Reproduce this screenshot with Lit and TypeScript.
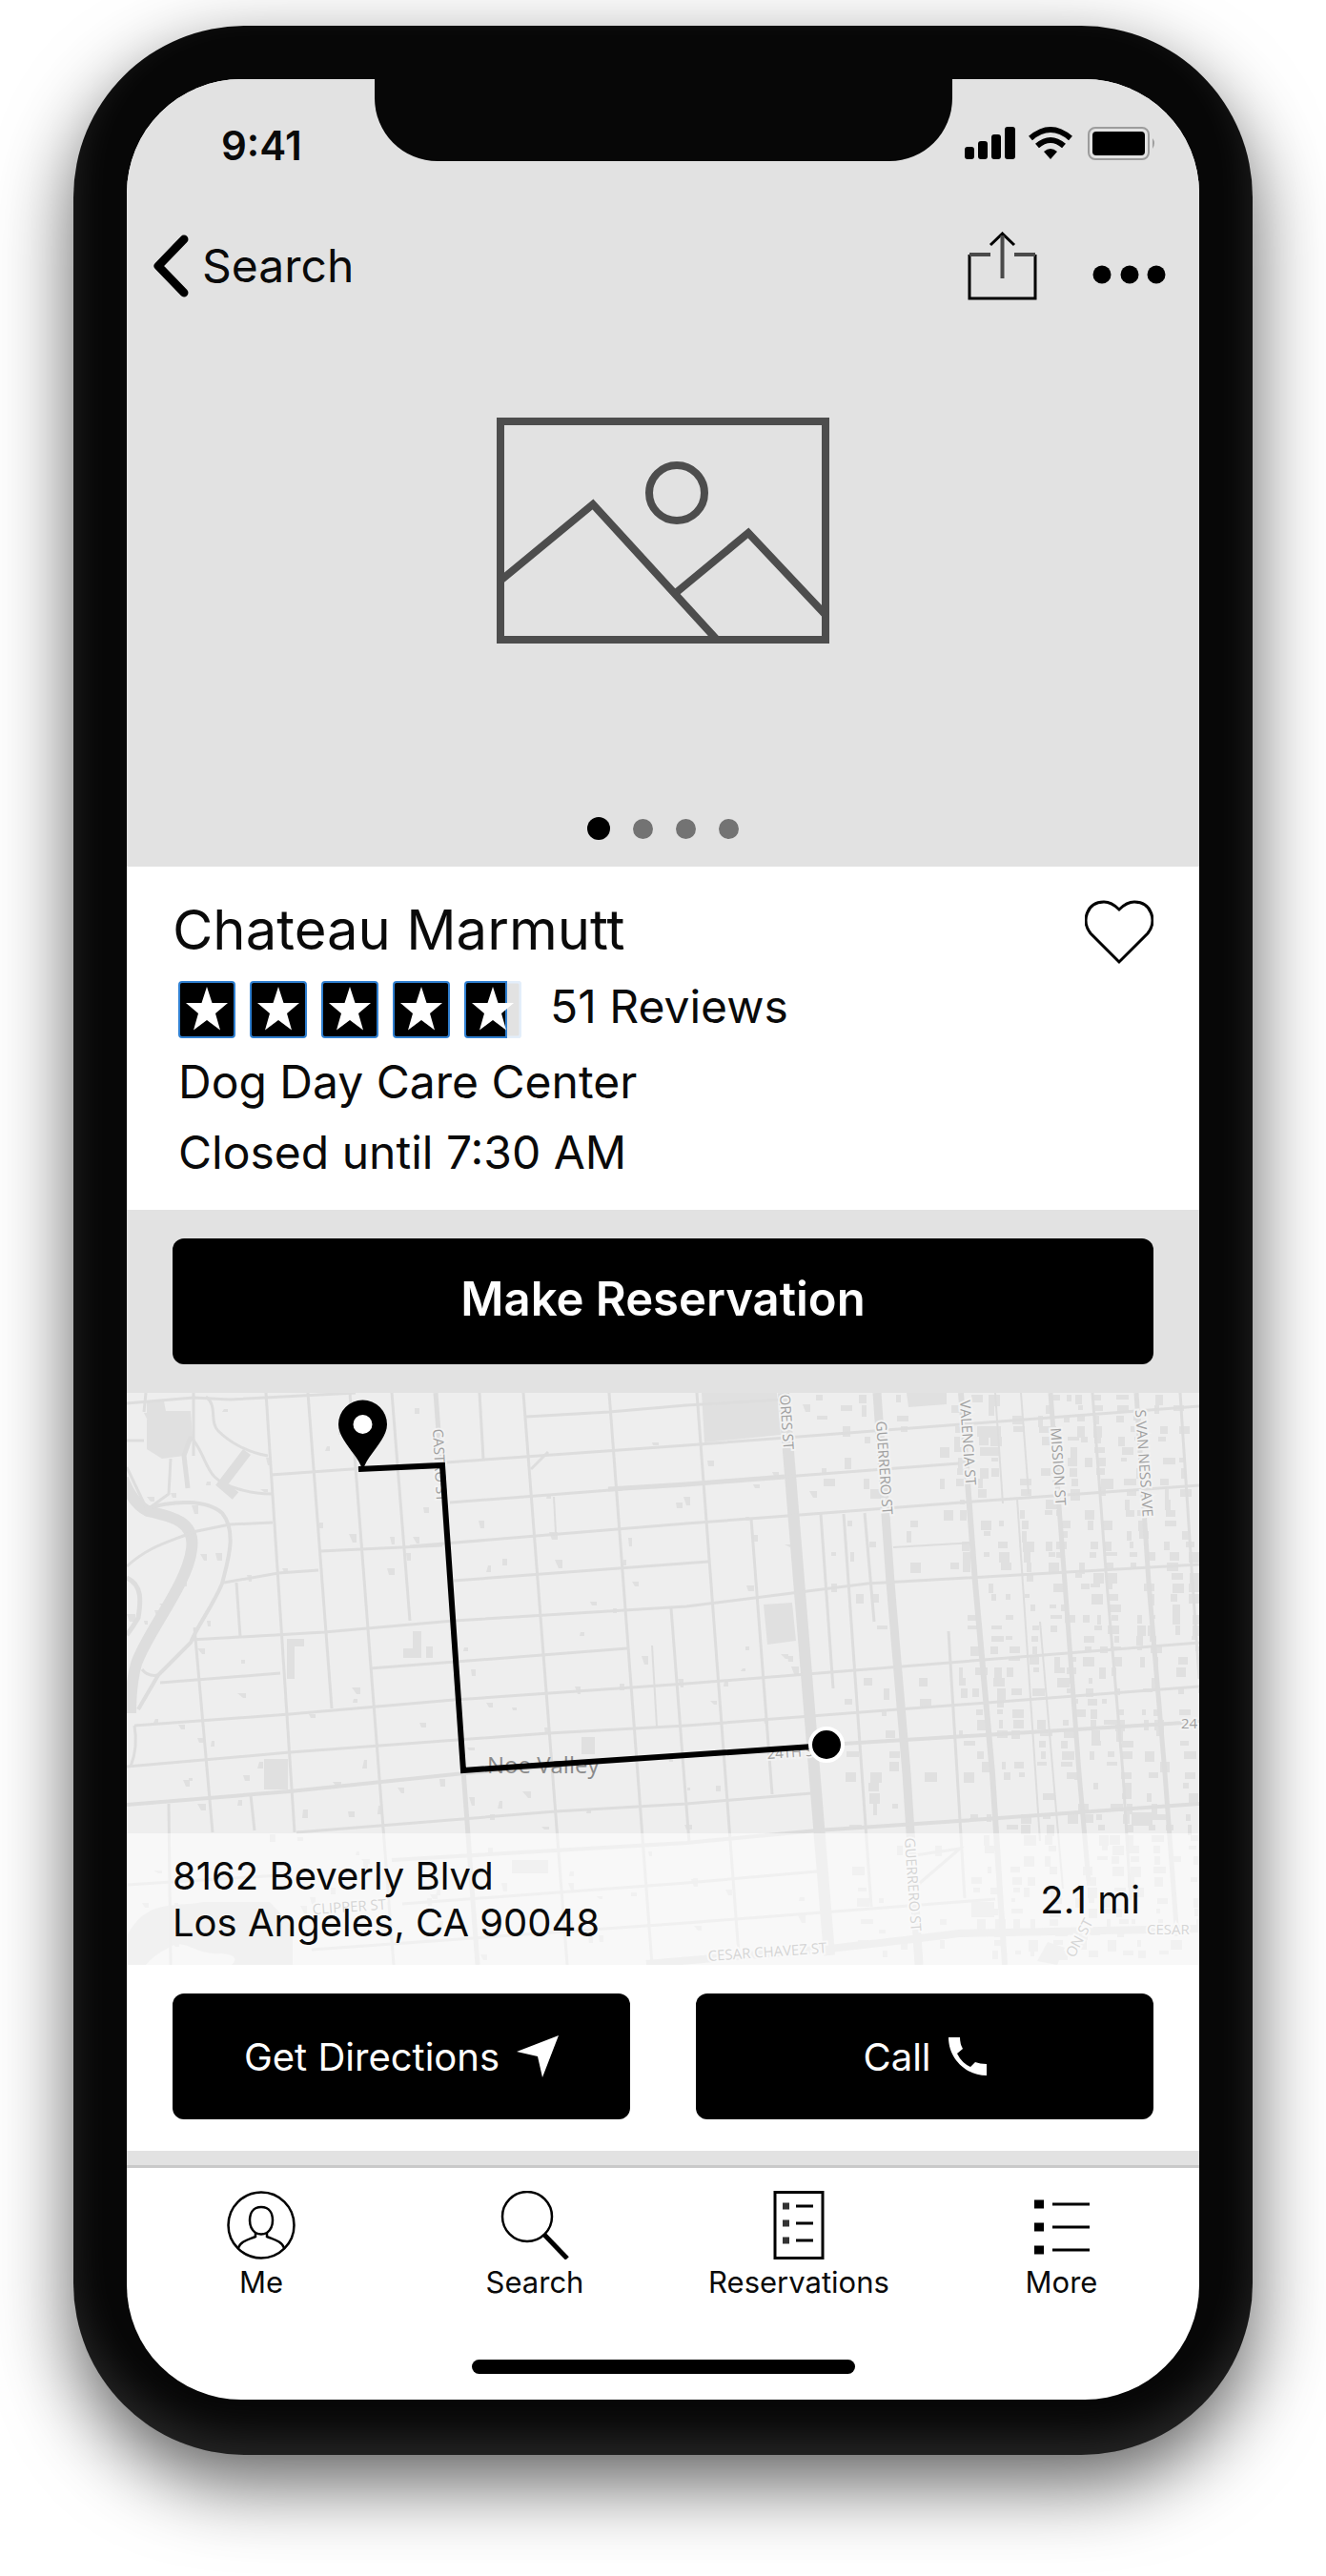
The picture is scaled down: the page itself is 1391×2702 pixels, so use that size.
import { LitElement, html, svg, css } from "lit";
import { customElement, property } from "lit/decorators.js";

type Street = [number, string];

/* Street centre lines of the neighbourhood, as [stroke width, points]. */
const STREETS: Street[] = [
  [3, "146,0 176,461"], [3, "190,0 215,331"], [3, "234,0 280,600"], [3, "278,0 297,239"],
  [5, "324,0 368,600"], [3, "370,0 374,69"], [3, "416,0 462,600"], [3, "506,0 551,600"],
  [3, "571,226 590,472"], [3, "71,246 90,461"], [3, "115,199 119,256"], [3, "44,431 46,600"],
  [3, "130,422 134,459"], [3, "598,0 642,590"], [3, "655,132 677,421"], [12, "689,0 737,590"],
  [3, "728,127 741,310"], [3, "752,127 781,539"], [3, "774,126 784,240"], [9, "787,0 801,199 818,399 831,600"],
  [3, "862,250 879,530"], [6, "875,0 890,199 908,399 921,600"], [2, "911,0 919,116"], [2, "938,0 946,106"],
  [2, "934,111 958,470"], [5, "969,0 984,199 999,399 1009,512"], [3, "1013,0 1028,199 1045,399 1053,532"],
  [5, "1059,0 1072,199 1089,399 1101,559"], [3, "1105,0 1118,199 1125,300"], [2, "958,240 982,520"],
  [3, "20,0 18,20"], [3, "70,0 70,66"],
  [3, "0,11 70,5 108,7 240,0"], [3, "151,86 587,55 1125,14"], [3, "339,115 520,101"], [5, "505,101 587,96 690,88"],
  [3, "690,88 873,74"], [3, "203,166 331,160"], [3, "297,161 587,137 693,129 888,114 1125,97"],
  [3, "102,199 159,189 201,186"], [3, "343,197 610,177"], [2, "804,162 888,157"],
  [3, "67,259 207,251 343,239 587,224 777,200 1125,180"], [3, "255,289 525,268"], [3, "35,304 161,294"],
  [3, "8,349 171,337 343,322 587,305 1125,262"], [3, "0,392 171,377 442,357 587,349 1125,308"],
  [4, "0,432 171,418 354,399 735,369 1125,345"], [3, "178,461 450,439 587,431 718,420"],
  [4, "278,490 587,472 724,459 873,449 1125,431"], [3, "289,536 587,514 724,502"], [3, "194,584 587,556 911,531"],
  [3, "0,516 160,506"], [8, "545,599 737,583 816,574 873,567 1125,562"], [3, "419,25 506,20 587,13 690,7"],
  [3, "825,520 874,478 820,486"], [2, "448,109 450,147"], [3, "424,80 442,62"], [2, "551,265 556,350"],
];

const CURVES: Street[] = [
  [12, "M-4 90 Q6 116 22 124 C50 130 72 136 68 164 C64 200 22 250 10 284 Q4 306 4 336"],
  [3, "M83 4 C96 14 86 30 96 40 S124 62 148 66"],
  [3, "M67 46 C80 60 82 78 92 88 S128 106 152 106"],
  [5, "M67 46 L60 66 L64 100"],
  [4, "M18 122 C50 112 84 112 100 126 C116 146 106 176 100 200 C90 224 74 244 67 262 L33 296 L12 332"],
  [3, "M0 182 C24 160 46 156 69 146 L108 138 L153 136"],
  [3, "M46 69 L44 106 L22 122"],
  [3, "M20 120 L0 78 M0 50 L18 50"],
  [5, "M0 194 C18 202 14 222 12 236 Q6 246 0 254"],
  [3, "M16 290 Q22 298 33 296"],
  [3, "M8 349 Q12 372 4 392"],
  [10, "M126 62 L100 96 L114 108"],
];

const BLOCKS = [
  "M21 9H39L41 19H67L69 46L60 66L37 69L21 59Z", "M144 384h25v32h-25Z", "M603 0H682L686 44L606 52Z",
  "M668 222L698 220L702 260L672 264Z", "M168 258h18v8h-10v34h-8Z", "M300 250h9v28h-9Z", "M290 268h12v10h-12Z",
  "M314 266h7v12h-7Z", "M818 0H860V12L820 15Z", "M477 361h14v18h-14Z", "M1054 440h22v14h-22Z",
  "M0 570 C20 530 50 540 80 534 H150 L174 560 V600 H110 Q120 590 100 588 C70 590 60 570 44 582 Q28 590 20 600 H0Z",
  "M886 534h24v16h-24Z", "M955 596L966 576L984 582L976 600Z", "M404 490h38v14h-38Z",
];

/* Small building footprints, scattered from a fixed seed so every render is alike. */
const footprints = (): string => {
  let seed = 41;
  const next = (): number => (seed = (seed * 16807) % 2147483647) / 2147483647;
  let d = "";
  for (let i = 0; i < 150; i++) {
    d += `M${Math.round(next() * 720)} ${Math.round(next() * 590)}h${3 + Math.round(next() * 6)}v${3 + Math.round(next() * 6)}h-${3 + Math.round(next() * 3)}Z`;
  }
  const columns = [722, 745, 766, 806, 845, 862, 885, 900, 925, 950, 962, 980, 994, 1010, 1036, 1050, 1076, 1096];
  for (const x of columns) {
    for (let y = 2; y < 590; y += 11) {
      const density = x > 860 ? 0.6 : 0.28;
      if (next() < density) {
        const w = 4 + Math.round(next() * 9);
        const h = 4 + Math.round(next() * 8);
        d += `M${Math.round(x + y * 0.078 + next() * 6)} ${y}h${w}v${h}h-${w}Z`;
      }
    }
  }
  return d;
};

/* [text, x, y, rotation, anchor] */
const STREET_NAMES: [string, number, number, number, string][] = [
  ["CASTRO ST", 321, 38, 87, "start"],
  ["ORES ST", 685, 2, 86, "start"],
  ["GUERRERO ST", 786, 30, 86, "start"],
  ["VALENCIA ST", 874, 8, 86, "start"],
  ["MISSION ST", 969, 37, 86, "start"],
  ["S VAN NESS AVE", 1058, 18, 86, "start"],
  ["24TH ST", 672, 384, -4, "start"],
  ["24", 1106, 352, 0, "start"],
  ["GUERRERO ST", 816, 467, 86, "start"],
  ["CESAR CHAVEZ ST", 610, 596, -4, "start"],
  ["CESAR", 1070, 568, 0, "start"],
  ["CLIPPER ST", 195, 547, -4, "start"],
  ["ON ST", 1014, 555, -62, "end"],
];

@customElement("area-map")
export class AreaMap extends LitElement {
  static styles = css`
    :host { display: block; }
    .map { display: block; width: 100%; background: #eeeeee; }
    .streets, .curves { fill: none; stroke: #dddddd; }
    .blocks { fill: #e0e0e0; }
    .names { font: 15px "Open Sans", "Noto Sans", sans-serif; fill: #a0a0a0; stroke: #f2f2f2; stroke-width: 4px; paint-order: stroke; }
    .district { font: 24px "Open Sans", "Noto Sans", sans-serif; fill: #8a8a8a; }
    .route { fill: none; stroke: #000; stroke-width: 6; }
    .pin { fill: #000; }
    .here { fill: #000; stroke: #fff; stroke-width: 4; }
    .hole { fill: #fff; }
  `;

  render() {
    return html`
      <svg class="map" viewBox="0 0 1125 600" role="img" aria-label="Route map">
        <path class="blocks" d=${BLOCKS.join("") + footprints()}></path>
        <g class="streets">${STREETS.map(([w, p]) => svg`<polyline points=${p} stroke-width=${w}></polyline>`)}</g>
        <g class="curves">${CURVES.map(([w, d]) => svg`<path d=${d} stroke-width=${w}></path>`)}</g>
        <g class="names">
          ${STREET_NAMES.map(([t, x, y, r, a]) => svg`<text text-anchor=${a} transform="translate(${x} ${y}) rotate(${r})">${t}</text>`)}
        </g>
        <text class="district" x="378" y="399">Noe Valley</text>
        <polyline class="route" points="243,80 331,76 353,396 734,370"></polyline>
        <path class="pin" d="M247 81 C244 66 222 50 222 33 A25.5 25.5 0 0 1 273 33 C273 50 251 66 248 81Z"></path>
        <circle class="hole" cx="247.5" cy="33" r="10"></circle>
        <circle class="here" cx="734" cy="369" r="17"></circle>
      </svg>
    `;
  }
}

@customElement("star-rating")
export class StarRating extends LitElement {
  @property({ type: Number }) value = 4.5;

  static styles = css`
    :host { display: flex; gap: 15px; }
    .star { display: block; width: 60px; height: 60px; }
  `;

  render() {
    const star = "M30 6L35.5 23H52L39 34L44 51.5L30 41L16 51.5L21 34L8 23H24.5Z";
    return [0, 1, 2, 3, 4].map((i) => {
      const full = this.value - i >= 1;
      return html`
        <svg class="star" viewBox="0 0 60 60" aria-hidden="true">
          ${full ? null : svg`<rect x="1" y="1" width="58" height="58" rx="3" fill="#e2e2e2" stroke="#e3eefa" stroke-width="3"></rect>`}
          <path d=${full ? "M4 1H56Q59 1 59 4V56Q59 59 56 59H4Q1 59 1 56V4Q1 1 4 1Z" : "M4 1H44V59H4Q1 59 1 56V4Q1 1 4 1Z"}
            fill="#000" stroke="#2f7fd0" stroke-width="2"></path>
          <path d=${star} fill="#fff"></path>
        </svg>`;
    });
  }
}

@customElement("app-root")
export class AppRoot extends LitElement {
  static styles = css`
    :host {
      display: block;
      padding: 27px 77px 127px;
      background: #fff;
      color: #0a0a0a;
      font-family: Inter, Roboto, "Liberation Sans", sans-serif;
      font-size: 48px;
      overflow: hidden;
    }
    *, *::before, *::after { box-sizing: border-box; }
    svg { display: block; flex: none; }
    h1, p { margin: 0; font-weight: 400; }
    button, a { margin: 0; padding: 0; border: 0; background: none; color: inherit; font: inherit; text-decoration: none; cursor: pointer; }
    .phone {
      position: relative;
      padding: 56px 56px 58px;
      border-radius: 180px;
      background: #070707;
      box-shadow:
        inset 0 -20px 40px rgba(255, 255, 255, 0.12),
        0 30px 80px rgba(0, 0, 0, 0.62);
    }
    .notch {
      position: absolute;
      top: 56px;
      left: 50%;
      width: 606px;
      height: 86px;
      margin-left: -303px;
      border-radius: 0 0 66px 66px;
      background: #070707;
    }
    .screen { overflow: hidden; border-radius: 120px; background: #fff; }
    .hero { display: flex; flex-direction: column; padding-bottom: 28px; background: #e2e2e2; }
    .status { display: flex; align-items: center; justify-content: space-between; height: 48px; margin-top: 46px; padding: 0 45px 0 99px; }
    .time { font-size: 42px; font-weight: 600; line-height: 48px; }
    .nav { display: flex; align-items: center; justify-content: space-between; margin-top: 66px; padding: 0 34px 0 27px; line-height: 72px; }
    .back { display: flex; align-items: center; gap: 14px; }
    .tools { display: flex; gap: 58px; }
    .tool { display: block; }
    .picture { align-self: center; margin-top: 123px; }
    .pages { display: flex; align-items: center; justify-content: center; gap: 24px; height: 24px; margin-top: 182px; }
    .page { width: 21px; height: 21px; border-radius: 50%; background: #737373; }
    .page.current { width: 24px; height: 24px; background: #000; }
    .info { padding: 35px 48px 23px; }
    .heading { display: flex; justify-content: space-between; height: 60px; }
    .title { font-size: 58px; line-height: 62px; }
    .details { padding-left: 6px; }
    .rating { display: flex; align-items: flex-start; gap: 30px; margin: 25px 0 9px; line-height: 54px; }
    .line { line-height: 74px; }
    .reserve { padding: 30px 48px; background: #e2e2e2; }
    .button { display: flex; align-items: center; justify-content: center; gap: 18px; width: 100%; height: 132px; border-radius: 12px; background: #000; color: #fff; font-size: 40px; }
    .button.primary { padding-bottom: 6px; font-size: 49px; font-weight: 600; }
    .location { position: relative; }
    .address {
      position: absolute;
      right: 0;
      bottom: 0;
      left: 0;
      display: flex;
      align-items: center;
      justify-content: space-between;
      padding: 20px 62px 20px 48px;
      background: rgba(255, 255, 255, 0.56);
      font-size: 40px;
      line-height: 49px;
    }
    .actions { display: grid; grid-template-columns: 1fr 1fr; gap: 69px; padding: 30px 48px 33px; }
    .band { height: 15px; background: #e2e2e2; }
    .tabs { display: grid; grid-template-columns: 282fr 292fr 262fr 289fr; border-top: 3px solid #c9c9c9; padding-top: 24px; }
    .tab { display: flex; flex-direction: column; align-items: center; gap: 6px; font-size: 31px; line-height: 36px; }
    .home { width: 402px; height: 15px; margin: 63px auto 27px; border-radius: 8px; background: #000; }
  `;

  render() {
    return html`
      <div class="phone">
        <main class="screen">
          <header class="hero">
            <div class="status">
              <span class="time">9:41</span>
              <svg width="201" height="42" viewBox="0 0 201 42" aria-hidden="true">
                <rect x="0" y="22" width="10" height="13" rx="3"></rect>
                <rect x="14" y="16" width="10" height="19" rx="3"></rect>
                <rect x="28" y="9" width="10" height="26" rx="3"></rect>
                <rect x="42" y="1" width="11" height="34" rx="3"></rect>
                <g fill="none" stroke="#000" stroke-width="6">
                  <path d="M69 13 Q90 -5 111 13"></path>
                  <path d="M76 21 Q90 9 104 21"></path>
                </g>
                <path d="M83 27 Q90 21 97 27 L90 35Z"></path>
                <rect x="130" y="2" width="63" height="33" rx="7" fill="none" stroke="#9c9c9c" stroke-width="2"></rect>
                <rect x="134" y="6" width="55" height="25" rx="4"></rect>
                <path d="M197 13 Q201 18 197 24Z" fill="#9c9c9c"></path>
              </svg>
            </div>
            <nav class="nav">
              <button class="back">
                <svg width="38" height="66" viewBox="0 0 38 66" aria-hidden="true">
                  <path d="M33 5L6 33L33 61" fill="none" stroke="#000" stroke-width="9" stroke-linecap="round" stroke-linejoin="round"></path>
                </svg>
                Search
              </button>
              <div class="tools">
                <button class="tool" aria-label="Share">
                  <svg width="73" height="72" viewBox="0 0 73 72">
                    <g fill="none" stroke="#000" stroke-width="3">
                      <path d="M2 24V70H71V24"></path>
                      <path d="M24 14L36.5 2L49 14"></path>
                    </g>
                    <path d="M24 24H2M71 24H49M36.5 4V49" fill="none" stroke="#4a4a4a" stroke-width="4"></path>
                  </svg>
                </button>
                <button class="tool" aria-label="More options">
                  <svg width="78" height="72" viewBox="0 0 78 72">
                    <circle cx="10" cy="45" r="9.5"></circle>
                    <circle cx="39" cy="45" r="9.5"></circle>
                    <circle cx="67" cy="45" r="9.5"></circle>
                  </svg>
                </button>
              </div>
            </nav>
            <svg class="picture" width="349" height="237" viewBox="0 0 349 237" role="img" aria-label="Photo placeholder">
              <g fill="none" stroke="#4d4d4d" stroke-width="8">
                <rect x="4" y="4" width="341" height="229"></rect>
                <circle cx="189" cy="79" r="29"></circle>
                <path d="M4 171L101 91L231 233"></path>
                <path d="M189 183L264 121L346 208"></path>
              </g>
            </svg>
            <div class="pages">
              <span class="page current"></span><span class="page"></span><span class="page"></span><span class="page"></span>
            </div>
          </header>

          <section class="info">
            <div class="heading">
              <h1 class="title">Chateau Marmutt</h1>
              <button class="tool" aria-label="Add to favourites">
                <svg width="72" height="68" viewBox="0 0 72 68">
                  <path d="M36 65L6 35C-4 22 2 2 20 2C28 2 33 7 36 10C39 7 44 2 52 2C70 2 76 22 66 35Z" fill="none" stroke="#000" stroke-width="3"></path>
                </svg>
              </button>
            </div>
            <div class="details">
              <div class="rating"><star-rating .value=${4.5}></star-rating><span>51 Reviews</span></div>
              <p class="line">Dog Day Care Center</p>
              <p class="line">Closed until 7:30 AM</p>
            </div>
          </section>

          <section class="reserve"><button class="button primary">Make Reservation</button></section>

          <section class="location">
            <area-map></area-map>
            <div class="address">
              <div>8162 Beverly Blvd<br />Los Angeles, CA 90048</div>
              <span>2.1 mi</span>
            </div>
          </section>

          <section class="actions">
            <button class="button">
              Get Directions
              <svg width="44" height="44" viewBox="0 0 44 44" aria-hidden="true"><path d="M44 0L27 44L22 22L0 17Z" fill="#fff"></path></svg>
            </button>
            <button class="button">
              Call
              <svg width="40" height="40" viewBox="0 0 40 40" aria-hidden="true">
                <path d="M0 0H12Q12 7 15 12L9 17Q14 27 23 31L28 26Q33 28 40 28V40C18 40 0 22 0 0Z" fill="#fff"></path>
              </svg>
            </button>
          </section>

          <div class="band"></div>
          <nav class="tabs">
            <a class="tab" href="#me">
              <svg width="74" height="72" viewBox="0 0 74 72" fill="none" stroke="#000" stroke-width="2.5" aria-hidden="true">
                <circle cx="37" cy="36" r="34.5"></circle>
                <path d="M37 17C28 17 25 24 25 31C25 37 27 41 31 44V48C24 51 15 53 13 60M37 17C46 17 49 24 49 31C49 37 47 41 43 44V48C50 51 59 53 61 60M31 44Q37 47 43 44"></path>
              </svg>
              Me
            </a>
            <a class="tab" href="#search">
              <svg width="72" height="72" viewBox="0 0 72 72" fill="none" stroke="#000" aria-hidden="true">
                <circle cx="28" cy="27" r="26" stroke-width="2.5"></circle>
                <path d="M46 46L70 71" stroke-width="5"></path>
              </svg>
              Search
            </a>
            <a class="tab" href="#reservations">
              <svg width="54" height="72" viewBox="0 0 54 72" fill="none" stroke="#000" stroke-width="3" aria-hidden="true">
                <rect x="2" y="1.5" width="50" height="69"></rect>
                <path d="M24 16H42M24 34H42M24 52H42"></path>
                <path d="M10 16H17M10 34H17M10 52H17" stroke-width="7" stroke="#333"></path>
              </svg>
              Reservations
            </a>
            <a class="tab" href="#more">
              <svg width="58" height="72" viewBox="0 0 58 72" fill="none" stroke="#000" stroke-width="3" aria-hidden="true">
                <path d="M19 14H58M19 38H58M19 62H58"></path>
                <path d="M0 14H10M0 38H10M0 62H10" stroke-width="9"></path>
              </svg>
              More
            </a>
          </nav>
          <div class="home"></div>
        </main>
        <div class="notch"></div>
      </div>
    `;
  }
}
